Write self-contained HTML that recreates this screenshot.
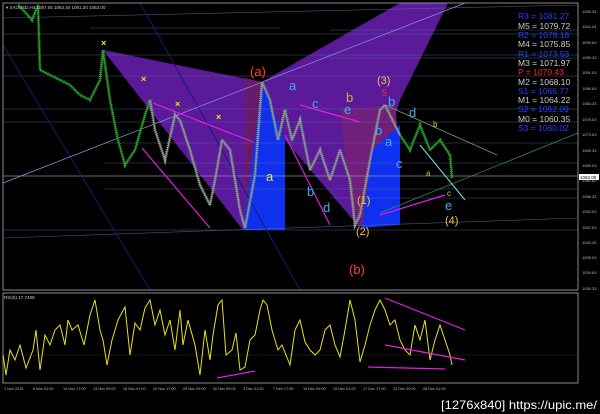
<!DOCTYPE html>
<html><head><meta charset="utf-8"><style>
html,body{margin:0;padding:0;background:#000;width:600px;height:414px;overflow:hidden}
svg{display:block}
text{font-family:"Liberation Sans",sans-serif}
</style></head><body>
<svg width="600" height="414" viewBox="0 0 600 414" xmlns="http://www.w3.org/2000/svg">
<rect width="600" height="414" fill="#000"/>
<polygon points="103,50 262,82 243,230" fill="#5a1a9a"/>
<polygon points="245,78 262,82 252,200 245,215" fill="#6a1a6a"/>
<polygon points="262,82 400,3 448,3 400,100 360,228 285,140" fill="#5a1a9a"/>
<polygon points="340,110 395,105 398,135 362,228 350,200" fill="#70207a"/>
<polygon points="262,82 285,140 285,230 243,230 252,160" fill="#1030f0"/>
<polygon points="372,150 400,125 400,225 362,228" fill="#1030f0"/>
<g stroke="#5a6aa0" stroke-width="0.6" opacity="0.8">
<line x1="3" y1="34" x2="578" y2="34"/><line x1="3" y1="55" x2="578" y2="55"/>
<line x1="3" y1="76" x2="578" y2="76"/><line x1="3" y1="109" x2="578" y2="109"/>
<line x1="3" y1="122" x2="578" y2="122"/><line x1="105" y1="143" x2="578" y2="143"/>
<line x1="3" y1="176" x2="578" y2="176"/><line x1="105" y1="163" x2="578" y2="163"/>
<line x1="105" y1="189" x2="578" y2="189"/><line x1="3" y1="230" x2="578" y2="230"/>
<line x1="90" y1="28" x2="280" y2="28"/><line x1="330" y1="30" x2="578" y2="30"/>
<line x1="330" y1="58" x2="578" y2="58"/><line x1="330" y1="198" x2="578" y2="198"/>
<line x1="3" y1="18" x2="578" y2="5"/><line x1="3" y1="238" x2="578" y2="218"/>
</g>
<line x1="3" y1="176" x2="578" y2="176" stroke="#aaa" stroke-width="0.6"/>
<g stroke="#1a1a70" stroke-width="1"><line x1="3" y1="45" x2="150" y2="290"/><line x1="140" y1="3" x2="300" y2="290"/></g>
<line x1="3" y1="183" x2="465" y2="3" stroke="#8899dd" stroke-width="0.7"/>
<line x1="380" y1="213" x2="578" y2="133" stroke="#2a8a6a" stroke-width="0.8"/>
<g stroke="#e020e0" stroke-width="1.2">
<line x1="153" y1="103" x2="253" y2="142"/><line x1="142" y1="148" x2="210" y2="228"/>
<line x1="300" y1="105" x2="360" y2="122"/><line x1="285" y1="135" x2="330" y2="225"/>
<line x1="380" y1="215" x2="445" y2="195"/>
</g>
<line x1="420" y1="145" x2="465" y2="200" stroke="#7adada" stroke-width="1"/>
<line x1="385" y1="105" x2="497" y2="155" stroke="#7a9a7a" stroke-width="0.8"/>
<polyline fill="none" stroke="#2a9a2a" stroke-width="3" stroke-dasharray="1 1" points="18,5 25,12 32,20 38,5 40,70 50,75 60,80 70,85 80,95 90,100 100,80 103,50 110,100 118,140 125,165 135,150 145,115 150,100"/>
<polyline fill="none" stroke="#2a9a2a" stroke-width="1.2" points="18,5 25,12 32,20 38,5 40,70 50,75 60,80 70,85 80,95 90,100 100,80 103,50 110,100 118,140 125,165 135,150 145,115 150,100"/>
<polyline fill="none" stroke="#8a9a8a" stroke-width="3" stroke-dasharray="1 1" points="150,100 155,130 165,160 175,115 180,120 190,150 200,185 210,205 215,180 222,140 230,150 240,210 245,228 255,175 262,82 270,100 278,140 285,110 292,140 300,120 310,170 320,150 330,180 340,150 350,180 355,225 360,215 370,160 380,110 385,105 395,125 400,135"/>
<polyline fill="none" stroke="#8a9a8a" stroke-width="1.2" points="150,100 155,130 165,160 175,115 180,120 190,150 200,185 210,205 215,180 222,140 230,150 240,210 245,228 255,175 262,82 270,100 278,140 285,110 292,140 300,120 310,170 320,150 330,180 340,150 350,180 355,225 360,215 370,160 380,110 385,105 395,125 400,135"/>
<polyline fill="none" stroke="#2a9a2a" stroke-width="3" stroke-dasharray="1 1" points="400,135 410,150 420,125 430,150 440,140 450,155 452,178"/>
<polyline fill="none" stroke="#2a9a2a" stroke-width="1.2" points="400,135 410,150 420,125 430,150 440,140 450,155 452,178"/>
<g font-size="9" fill="#ee0" font-weight="bold"><text x="101" y="46">×</text><text x="141" y="82">×</text><text x="175" y="107">×</text><text x="216" y="120">×</text></g>
<g font-size="13" fill="#ff4020"><text x="250" y="76">(a)</text><text x="349" y="274">(b)</text></g>
<g font-size="11" fill="#f5c040"><text x="377" y="84">(3)</text><text x="357" y="204">(1)</text><text x="356" y="235">(2)</text><text x="445" y="224">(4)</text></g>
<g font-size="13" fill="#3ab0f0"><text x="289" y="90">a</text><text x="312" y="108">c</text><text x="344" y="114">e</text><text x="388" y="106">b</text><text x="409" y="117">d</text><text x="307" y="196">b</text><text x="323" y="212">d</text><text x="385" y="146">a</text><text x="396" y="168">c</text><text x="445" y="210">e</text><text x="375" y="135">b</text></g>
<text x="346" y="102" font-size="13" fill="#d0b050">b</text>
<text x="266" y="181" font-size="13" fill="#e0e060">a</text>
<g font-size="8" fill="#d0d030"><text x="426" y="176">a</text><text x="433" y="127">b</text><text x="447" y="196">c</text></g>
<text x="382" y="96" font-size="9" fill="#f03030">5</text>
<g font-size="8.5" fill="#ccc"><text x="518" y="29">M5 = 1079.72</text><text x="518" y="47">M4 = 1075.85</text><text x="518" y="66">M3 = 1071.97</text><text x="518" y="85">M2 = 1068.10</text><text x="518" y="103">M1 = 1064.22</text><text x="518" y="122">M0 = 1060.35</text></g>
<g font-size="8.5" fill="#2040ff"><text x="518" y="19">R3 = 1081.27</text><text x="518" y="38">R2 = 1078.18</text><text x="518" y="57">R1 = 1073.53</text><text x="518" y="94">S1 = 1066.77</text><text x="518" y="112">S2 = 1062.09</text><text x="518" y="131">S3 = 1060.02</text></g>
<text x="518" y="75" font-size="8.5" fill="#ff2020">P = 1070.43</text>
<rect x="3" y="3" width="575" height="287" fill="none" stroke="#aaa" stroke-width="0.8"/>
<rect x="3" y="293" width="575" height="90" fill="none" stroke="#aaa" stroke-width="0.8"/>
<g font-size="4" fill="#bbb"><text x="582" y="13">1108.33</text><text x="582" y="28">1104.03</text><text x="582" y="44">1099.63</text><text x="582" y="59">1095.33</text><text x="582" y="74">1091.03</text><text x="582" y="90">1086.63</text><text x="582" y="105">1082.33</text><text x="582" y="121">1078.03</text><text x="582" y="136">1073.63</text><text x="582" y="152">1069.33</text><text x="582" y="167">1065.03</text><text x="582" y="182">1060.63</text><text x="582" y="198">1056.33</text><text x="582" y="213">1052.03</text><text x="582" y="229">1047.63</text><text x="582" y="244">1043.33</text><text x="582" y="259">1039.03</text><text x="582" y="274">1034.63</text><text x="582" y="290">1030.33</text></g>
<rect x="579" y="174" width="20" height="6" fill="#fff"/><text x="580" y="179" font-size="4.5" fill="#000">1062.00</text>
<text x="6" y="9" font-size="4.5" fill="#ccc">▾ XAUUSD,H4 1067.05 1063.40 1061.20 1062.00</text>
<text x="4" y="299" font-size="4.5" fill="#ccc">RSI(5) 17.7489</text>
<line x1="3" y1="355" x2="578" y2="355" stroke="#333" stroke-width="0.6"/>
<polyline fill="none" stroke="#e8e020" stroke-width="1" points="3,355 6,375 10,350 15,360 20,345 26,368 33,350 36,330 40,370 45,335 50,345 55,330 60,325 65,345 68,320 72,330 78,325 84,345 90,315 95,300 100,330 103,340 107,365 112,340 118,320 125,307 130,355 135,323 140,330 145,308 150,300 155,325 160,310 165,335 170,320 175,350 180,310 183,345 188,320 195,345 200,375 205,330 210,360 213,335 218,305 222,300 226,355 232,350 236,333 240,370 245,367 250,340 255,335 260,310 263,300 267,305 272,330 278,350 282,345 290,365 295,330 300,320 305,342 310,350 315,355 320,350 325,330 330,325 335,345 340,357 345,330 350,300 355,320 360,362 365,345 370,325 375,310 380,300 385,310 390,325 395,320 400,340 405,350 410,355 415,325 420,340 425,320 430,360 435,340 440,325 445,340 450,355 452,365"/>
<g stroke="#e020e0" stroke-width="1.2"><line x1="385" y1="298" x2="465" y2="330"/><line x1="385" y1="345" x2="465" y2="360"/><line x1="368" y1="367" x2="445" y2="369"/><line x1="217" y1="378" x2="255" y2="371"/></g>
<g font-size="3.8" fill="#bbb"><text x="4" y="390">1 Nov 2015</text><text x="33" y="390">6 Nov 01:00</text><text x="63" y="390">10 Nov 17:00</text><text x="93" y="390">13 Nov 09:00</text><text x="123" y="390">18 Nov 01:00</text><text x="153" y="390">20 Nov 17:00</text><text x="183" y="390">25 Nov 09:00</text><text x="213" y="390">30 Nov 09:05</text><text x="243" y="390">3 Dec 01:00</text><text x="273" y="390">7 Dec 17:55</text><text x="303" y="390">10 Dec 09:00</text><text x="333" y="390">15 Dec 01:00</text><text x="363" y="390">17 Dec 17:00</text><text x="393" y="390">22 Dec 09:00</text><text x="423" y="390">28 Dec 01:55</text></g>
<text x="441" y="409" font-size="12" fill="#fff" textLength="156" lengthAdjust="spacingAndGlyphs">[1276x840] https://upic.me/</text>
</svg>
</body></html>
